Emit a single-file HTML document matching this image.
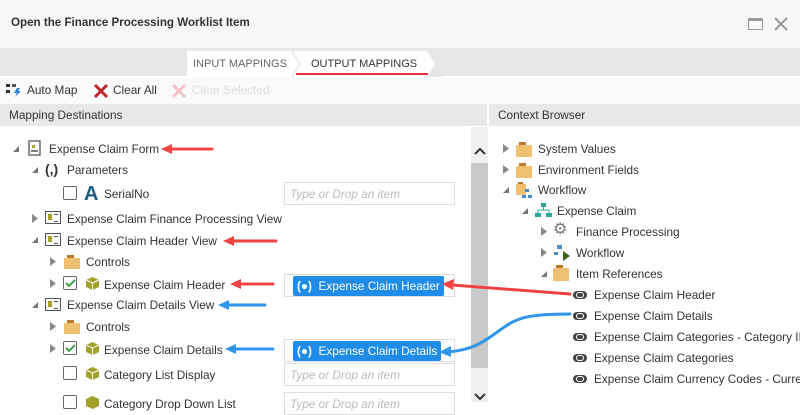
<!DOCTYPE html>
<html><head><meta charset="utf-8"><style>
*{margin:0;padding:0;box-sizing:border-box}
body{width:800px;height:402px;overflow:hidden;background:#fff;font-family:"Liberation Sans",sans-serif;color:#333;font-size:11.8px;position:relative}
.a{position:absolute;white-space:nowrap}
.t{position:absolute;white-space:nowrap;line-height:16px}
.cb{position:absolute;width:14px;height:14px;border:1px solid #666;border-radius:2px;background:#fff}
.box{position:absolute;left:284px;width:171px;height:23px;border:1px solid #ddd;background:#fff;color:#bbb;font-style:italic;font-size:11.8px;padding:4px 0 0 5px}
.pill{position:absolute;left:8px;top:1px;height:20px;background:#1e8ce8;color:#fff;font-style:normal;padding:3px 4px 0 4px;border-radius:2px;font-size:11.8px}
.folder{position:absolute;width:16px;height:11px;background:#efc06f}
.folder:before{content:"";position:absolute;left:3px;top:-3px;width:7px;height:3px;background:#b77a30}
.view{position:absolute;width:16px;height:13px;border:1.5px solid #555;background:#fff}
.view:before{content:"";position:absolute;left:2px;top:2px;width:4px;height:6px;background:#a3a52a}
.view:after{content:"";position:absolute;left:8px;top:2px;width:4px;height:6px;border-top:1.5px solid #555;border-bottom:1.5px solid #555}
.cube{position:absolute;width:15px;height:15px}
.ref{position:absolute;width:14px;height:8px;background:#444;border-radius:4px}
.ref:before{content:"";position:absolute;left:3px;top:1px;width:8px;height:6px;background:#fff;border-radius:3px}
.ref:after{content:"";position:absolute;left:4px;top:2px;width:6px;height:4px;background:#444;border-radius:2px}
</style></head><body>
<div class="a" style="left:0;top:0;width:800px;height:48px;background:#f7f7f7"></div>
<div class="a" style="left:11px;top:16px;font-size:11.6px;font-weight:bold;color:#333">Open the Finance Processing Worklist Item</div>
<div class="a" style="left:748px;top:18px;width:15px;height:12px;border:1.5px solid #999;border-top-width:3px"></div>
<svg class="a" style="left:773px;top:16px" width="16" height="16"><path d="M2 2L14 14M14 2L2 14" stroke="#999" stroke-width="2"/></svg>
<div class="a" style="left:0;top:48px;width:800px;height:28px;background:#e7e7e7"></div>
<div class="a" style="left:187px;top:51px;width:248px;height:26px;background:#fff"></div>
<svg class="a" style="left:292px;top:51px" width="150" height="26"><path d="M0 0L8 13L0 26" fill="none" stroke="#ddd"/><path d="M135 0L143 13L135 26L150 26L150 0Z" fill="#e7e7e7"/></svg>
<div class="a" style="left:193px;top:58px;font-size:11px;color:#666">INPUT MAPPINGS</div>
<div class="a" style="left:311px;top:58px;font-size:11px;color:#333">OUTPUT MAPPINGS</div>
<div class="a" style="left:296px;top:73px;width:132px;height:2px;background:#e8323c"></div>
<div class="a" style="left:0;top:78px;width:800px;height:26px;background:#fafafa"></div>
<svg class="a" style="left:5px;top:82px" width="18" height="16"><rect x="1" y="2" width="4" height="3" fill="#333"/><rect x="1" y="8" width="4" height="3" fill="#333"/><rect x="7" y="2" width="4" height="3" fill="#555"/><path d="M12 6L9 11H12L10 15L16 9H13L15 6Z" fill="#2a7fd4"/></svg>
<div class="a" style="left:27px;top:83px">Auto Map</div>
<svg class="a" style="left:93px;top:83px" width="16" height="16"><path d="M2 2L14 14M14 2L2 14" stroke="#c0262d" stroke-width="3"/></svg>
<div class="a" style="left:113px;top:83px">Clear All</div>
<svg class="a" style="left:171px;top:83px" width="16" height="16"><path d="M2 2L14 14M14 2L2 14" stroke="#f2c2c4" stroke-width="3"/></svg>
<div class="a" style="left:192px;top:83px;color:#ddd">Clear Selected</div>
<div class="a" style="left:0;top:104px;width:487px;height:22px;background:#e8e8e8"></div>
<div class="a" style="left:489px;top:104px;width:311px;height:22px;background:#e8e8e8"></div>
<div class="a" style="left:9px;top:108px">Mapping Destinations</div>
<div class="a" style="left:498px;top:108px">Context Browser</div>
<div class="a" style="left:471px;top:127px;width:17px;height:275px;background:#f0f0f0"></div>
<div class="a" style="left:471px;top:163px;width:17px;height:205px;background:#c9c9c9"></div>
<svg class="a" style="left:473px;top:146px" width="14" height="10"><path d="M2 8L7 3L12 8" fill="none" stroke="#333" stroke-width="2"/></svg>
<svg class="a" style="left:473px;top:392px" width="14" height="10"><path d="M2 2L7 7L12 2" fill="none" stroke="#333" stroke-width="2"/></svg>

<svg class="a" style="left:12px;top:145px" width="8" height="8"><path d="M7 1V7H1Z" fill="#777"/></svg>
<svg class="a" style="left:28px;top:140px" width="14" height="16"><rect x="1" y="1" width="11" height="14" fill="#fff" stroke="#555" stroke-width="1.3"/><rect x="4" y="5" width="3" height="3" fill="#b3a52a"/><path d="M3 11H10" stroke="#555" stroke-width="1.5"/></svg>
<div class="t" style="left:49px;top:141px">Expense Claim Form</div>
<svg class="a" style="left:31px;top:166px" width="8" height="8"><path d="M7 1V7H1Z" fill="#777"/></svg>
<div class="t" style="left:45px;top:161px;font-weight:bold;font-size:14px">(,)</div>
<div class="t" style="left:67px;top:162px">Parameters</div>
<div class="cb" style="left:63px;top:186px"></div>
<div class="t" style="left:84px;top:184px;font-weight:bold;font-size:20px;color:#1f5d85;line-height:20px">A</div>
<div class="t" style="left:104px;top:186px">SerialNo</div>
<div class="box" style="top:182px">Type or Drop an item</div>
<svg class="a" style="left:31px;top:214px" width="8" height="9"><path d="M1 0L7 4.5L1 9Z" fill="#888"/></svg>
<div class="view" style="left:45px;top:211px"></div>
<div class="t" style="left:67px;top:211px">Expense Claim Finance Processing View</div>
<svg class="a" style="left:31px;top:236px" width="8" height="8"><path d="M7 1V7H1Z" fill="#777"/></svg>
<div class="view" style="left:45px;top:233px"></div>
<div class="t" style="left:67px;top:233px">Expense Claim Header View</div>
<svg class="a" style="left:49px;top:257px" width="8" height="9"><path d="M1 0L7 4.5L1 9Z" fill="#888"/></svg>
<div class="folder" style="left:64px;top:258px"></div>
<div class="t" style="left:86px;top:254px">Controls</div>
<svg class="a" style="left:49px;top:279px" width="8" height="9"><path d="M1 0L7 4.5L1 9Z" fill="#888"/></svg>
<div class="cb" style="left:63px;top:276px"></div><svg class="a" style="left:65px;top:279px" width="11" height="9"><path d="M1 4L4 7L10 1" fill="none" stroke="#2a9a3a" stroke-width="1.8"/></svg>
<svg class="cube" style="left:85px;top:276px" viewBox="0 0 15 15"><path d="M7.5 1L14 4V11L7.5 14L1 11V4Z" fill="#a2a12b"/><path d="M1 4L7.5 7L14 4M7.5 7V14" stroke="#fff" stroke-width="1" fill="none"/></svg>
<div class="t" style="left:104px;top:277px">Expense Claim Header</div>
<div class="box" style="top:274px"><div class="pill"><span style="font-weight:bold">(●)</span>&nbsp; Expense Claim Header</div></div>
<svg class="a" style="left:31px;top:301px" width="8" height="8"><path d="M7 1V7H1Z" fill="#777"/></svg>
<div class="view" style="left:45px;top:298px"></div>
<div class="t" style="left:67px;top:297px">Expense Claim Details View</div>
<svg class="a" style="left:49px;top:322px" width="8" height="9"><path d="M1 0L7 4.5L1 9Z" fill="#888"/></svg>
<div class="folder" style="left:64px;top:323px"></div>
<div class="t" style="left:86px;top:319px">Controls</div>
<svg class="a" style="left:49px;top:344px" width="8" height="9"><path d="M1 0L7 4.5L1 9Z" fill="#888"/></svg>
<div class="cb" style="left:63px;top:341px"></div><svg class="a" style="left:65px;top:344px" width="11" height="9"><path d="M1 4L4 7L10 1" fill="none" stroke="#2a9a3a" stroke-width="1.8"/></svg>
<svg class="cube" style="left:85px;top:341px" viewBox="0 0 15 15"><path d="M7.5 1L14 4V11L7.5 14L1 11V4Z" fill="#a2a12b"/><path d="M1 4L7.5 7L14 4M7.5 7V14" stroke="#fff" stroke-width="1" fill="none"/></svg>
<div class="t" style="left:104px;top:342px">Expense Claim Details</div>
<div class="box" style="top:339px"><div class="pill"><span style="font-weight:bold">(●)</span>&nbsp; Expense Claim Details</div></div>
<div class="cb" style="left:63px;top:366px"></div>
<svg class="cube" style="left:85px;top:366px" viewBox="0 0 15 15"><path d="M7.5 1L14 4V11L7.5 14L1 11V4Z" fill="#a2a12b"/><path d="M1 4L7.5 7L14 4M7.5 7V14" stroke="#fff" stroke-width="1" fill="none"/></svg>
<div class="t" style="left:104px;top:367px">Category List Display</div>
<div class="box" style="top:363px">Type or Drop an item</div>
<div class="cb" style="left:63px;top:395px"></div>
<svg class="cube" style="left:85px;top:395px" viewBox="0 0 15 15"><path d="M7.5 1L14 4V11L7.5 14L1 11V4Z" fill="#a2a12b"/></svg>
<div class="t" style="left:104px;top:396px">Category Drop Down List</div>
<div class="box" style="top:392px">Type or Drop an item</div>

<svg class="a" style="left:502px;top:144px" width="8" height="9"><path d="M1 0L7 4.5L1 9Z" fill="#888"/></svg>
<div class="folder" style="left:516px;top:145px;height:12px"></div>
<div class="t" style="left:538px;top:141px">System Values</div>
<svg class="a" style="left:502px;top:165px" width="8" height="9"><path d="M1 0L7 4.5L1 9Z" fill="#888"/></svg>
<div class="folder" style="left:516px;top:166px;height:12px"></div>
<div class="t" style="left:538px;top:162px">Environment Fields</div>
<svg class="a" style="left:502px;top:186px" width="8" height="8"><path d="M7 1V7H1Z" fill="#777"/></svg>
<svg class="a" style="left:515px;top:181px" width="17" height="18"><rect x="1" y="3" width="10" height="11" fill="#efc06f"/><rect x="3" y="1" width="5" height="2" fill="#b77a30"/><rect x="10" y="8" width="4" height="3" fill="#4a8fc6"/><rect x="7" y="14" width="4" height="3" fill="#4a8fc6"/><rect x="13" y="14" width="4" height="3" fill="#4a8fc6"/></svg>
<div class="t" style="left:538px;top:182px">Workflow</div>
<svg class="a" style="left:521px;top:207px" width="8" height="8"><path d="M7 1V7H1Z" fill="#777"/></svg>
<svg class="a" style="left:535px;top:202px" width="17" height="16"><rect x="6" y="1" width="5" height="4" fill="#2fa59c"/><path d="M8.5 5V8M3 8H14M3 8V11M14 8V11" stroke="#2fa59c" fill="none"/><rect x="0" y="11" width="6" height="4" fill="#2fa59c"/><rect x="11" y="11" width="6" height="4" fill="#2fa59c"/></svg>
<div class="t" style="left:557px;top:203px">Expense Claim</div>
<svg class="a" style="left:540px;top:227px" width="8" height="9"><path d="M1 0L7 4.5L1 9Z" fill="#888"/></svg>
<div class="t" style="left:553px;top:222px;font-size:16px;color:#777">⚙</div>
<div class="t" style="left:576px;top:224px">Finance Processing</div>
<svg class="a" style="left:540px;top:248px" width="8" height="9"><path d="M1 0L7 4.5L1 9Z" fill="#888"/></svg>
<svg class="a" style="left:553px;top:244px" width="18" height="17"><rect x="4" y="1" width="5" height="4" fill="#4a8fc6"/><rect x="1" y="8" width="4" height="3" fill="#4a8fc6"/><path d="M10 7L17 12L10 17Z" fill="#3b6312"/></svg>
<div class="t" style="left:576px;top:245px">Workflow</div>
<svg class="a" style="left:540px;top:270px" width="8" height="8"><path d="M7 1V7H1Z" fill="#777"/></svg>
<div class="folder" style="left:553px;top:268px;height:13px"></div>
<div class="t" style="left:576px;top:266px">Item References</div>
<div class="ref" style="left:573px;top:291px"></div><div class="t" style="left:594px;top:287px">Expense Claim Header</div>
<div class="ref" style="left:573px;top:312px"></div><div class="t" style="left:594px;top:308px">Expense Claim Details</div>
<div class="ref" style="left:573px;top:333px"></div><div class="t" style="left:594px;top:329px">Expense Claim Categories - Category ID</div>
<div class="ref" style="left:573px;top:354px"></div><div class="t" style="left:594px;top:350px">Expense Claim Categories</div>
<div class="ref" style="left:573px;top:375px"></div><div class="t" style="left:594px;top:371px">Expense Claim Currency Codes - Currency</div>

<svg class="a" style="left:0;top:0" width="800" height="402">
<g fill="none" stroke-width="3" stroke-linecap="round">
<path d="M212 149H170" stroke="#f04444"/><path d="M276 241H232" stroke="#f04444"/><path d="M273 284H239" stroke="#f04444"/>
<path d="M570 294L452 285" stroke="#f04444"/>
<path d="M265 305H227" stroke="#2f96ec"/><path d="M273 349H234" stroke="#2f96ec"/>
<path d="M570 314C520 314 515 320 500 330C480 345 470 350 448 352" stroke="#2f96ec"/>
</g>
<path d="M161 149L172 144L172 154Z" fill="#f04444"/>
<path d="M223 241L234 236L234 246Z" fill="#f04444"/>
<path d="M230 284L241 279L241 289Z" fill="#f04444"/>
<path d="M442 284L454 279L453 290Z" fill="#f04444"/>
<path d="M218 305L229 300L229 310Z" fill="#2f96ec"/>
<path d="M225 349L236 344L236 354Z" fill="#2f96ec"/>
<path d="M439 352L451 346L451 357Z" fill="#2f96ec"/>
</svg>
</body></html>
